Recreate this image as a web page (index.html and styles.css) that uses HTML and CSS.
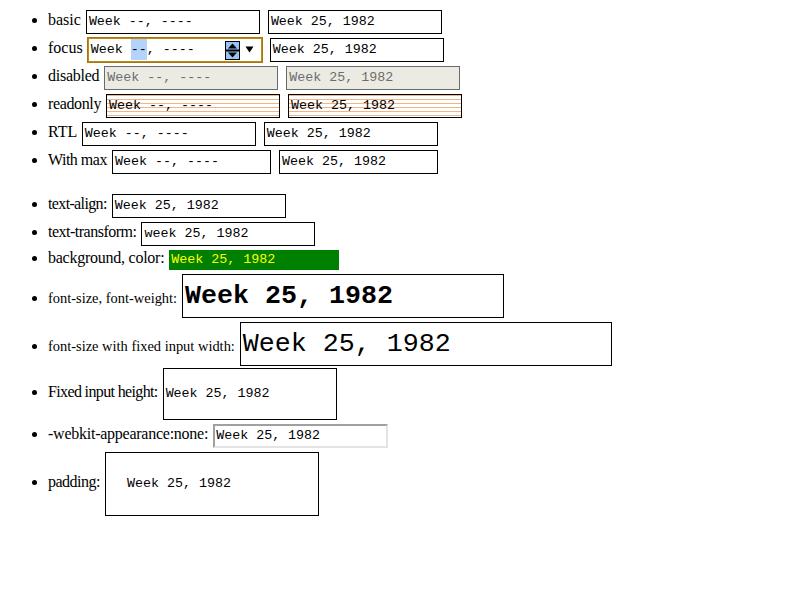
FILE: index.html
```html
<!DOCTYPE html>
<html>
<head>
<meta charset="utf-8">
<link rel="stylesheet" href="styles.css">
</head>
<body>
<ul class="list list-top">
  <li>basic <span class="field">Week --, ----</span> <span class="field">Week 25, 1982</span></li>
  <li>focus <span class="field focus"><span class="ftext">Week <span class="sel">--</span>, ----</span><svg class="spin" width="15" height="19" viewBox="0 0 15 19"><rect x="0.5" y="0.5" width="14" height="18" fill="#97c3f5" stroke="#000"/><polygon points="3,7.5 12,7.5 7.5,2.5" fill="#000"/><rect x="1" y="8.5" width="13" height="2" fill="#000"/><polygon points="3,11.5 12,11.5 7.5,16.5" fill="#000"/></svg><svg class="drop" width="9" height="7" viewBox="0 0 9 7"><polygon points="0.5,0.5 8.5,0.5 4.5,6.5" fill="#000"/></svg></span> <span class="field">Week 25, 1982</span></li>
  <li><span class="t1">disabled</span> <span class="field disabled">Week --, ----</span> <span class="field disabled">Week 25, 1982</span></li>
  <li><span class="t2">readonly</span> <span class="field readonly">Week --, ----</span> <span class="field readonly">Week 25, 1982</span></li>
  <li>RTL <span class="field">Week --, ----</span> <span class="field">Week 25, 1982</span></li>
  <li><span class="t3">With max</span> <span class="field narrow">Week --, ----</span> <span class="field narrow">Week 25, 1982</span></li>
</ul>
<ul class="list">
  <li><span class="t4">text-align:</span> <span class="field">Week 25, 1982</span></li>
  <li><span class="t3">text-transform:</span> <span class="field">week 25, 1982</span></li>
  <li><span class="t1">background, color:</span> <span class="field colored">Week 25, 1982</span></li>
  <li><span class="small">font-size, font-weight:</span> <span class="field big bold">Week 25, 1982</span></li>
  <li><span class="small">font-size with fixed input width:</span> <span class="field big wide">Week 25, 1982</span></li>
  <li><span class="t4">Fixed input height:</span> <span class="field tall">Week 25, 1982</span></li>
  <li><span class="t1">-webkit-appearance:none:</span> <span class="field plain">Week 25, 1982</span></li>
  <li><span class="t3">padding:</span> <span class="field padded">Week 25, 1982</span></li>
</ul>
</body>
</html>
```
FILE: styles.css
```css
html { background: #fff; }
body {
  margin: 8px;
  font-family: "Liberation Serif", serif;
  font-size: 16px;
  color: #000;
}
.list {
  margin: 0;
  padding-left: 40px;
}
.list-top { margin-bottom: 16px; }

.t1 { letter-spacing: -0.25px; }
.t2 { letter-spacing: -0.36px; }
.t3 { letter-spacing: -0.5px; }
.t4 { letter-spacing: -0.64px; }
.small { font-size: 14.45px; }

.field {
  display: inline-block;
  box-sizing: border-box;
  width: 174px;
  height: 24px;
  margin: 2px 3px 2px 1px;
  padding: 0 2px;
  border: 1px solid #000;
  background: #fff;
  color: #000;
  font-family: "Liberation Mono", monospace;
  font-size: 13.33px;
  line-height: 22px;
  white-space: pre;
  vertical-align: baseline;
  text-align: left;
  letter-spacing: 0;
}

.focus {
  display: inline-flex;
  align-items: center;
  border-color: #c08a18;
  box-shadow: 0 0 0 1px #a67610;
  padding: 0 2px 0 2px;
}
.ftext { flex: 1; }
.sel {
  background: #b3d3fb;
  padding: 3px 0;
}
.spin { flex: none; display: block; margin-right: 5px; }
.drop { flex: none; display: block; margin-right: 5px; margin-top: -1px; }

.disabled {
  background: #ebeae3;
  color: #6d6d6d;
  border-color: #6a6a6a;
}
.readonly {
  background-color: #fff;
  background-image: linear-gradient(to bottom, transparent 0, transparent 3px, #f2b484 3px, #f2b484 4px);
  background-size: 100% 4px;
  background-repeat: repeat-y;
  background-position: 0 1px;
}
.narrow { width: 159px; }

.colored {
  width: 170px;
  height: 20px;
  line-height: 20px;
  border: 0;
  padding: 0 2px;
  background: #008000;
  color: #ffff00;
}
.big {
  height: 44px;
  width: 322px;
  font-size: 26.67px;
  line-height: 42px;
}
.bold { font-weight: bold; }
.wide { width: 372px; font-weight: normal; }
.tall {
  height: 52px;
  line-height: 50px;
  margin-top: 0;
}
.plain {
  width: 175px;
  border-width: 2px;
  border-style: solid;
  border-color: #a0a0a0 #e4e4e4 #e4e4e4 #a0a0a0;
  line-height: 20px;
  padding: 0 1px;
}
.padded {
  width: 214px;
  height: 64px;
  line-height: 62px;
  padding: 0 20px 0 21px;
}
```
